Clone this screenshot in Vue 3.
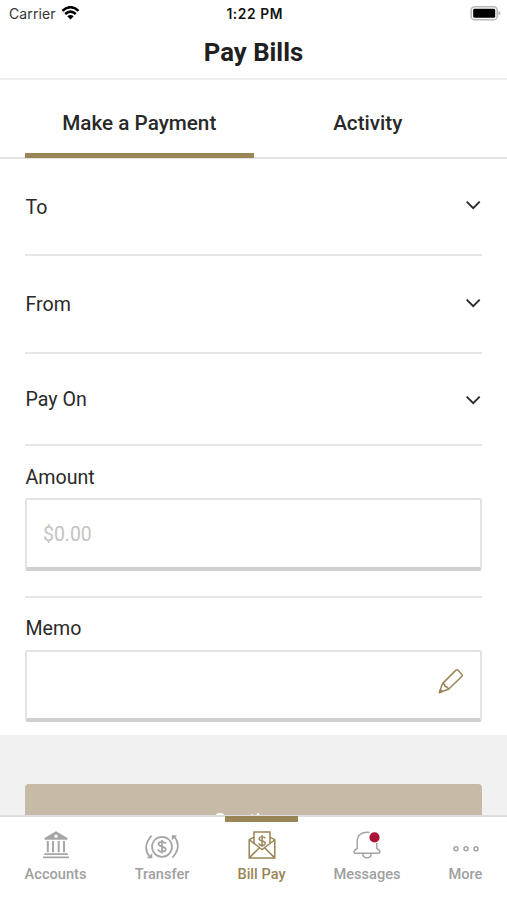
<script setup>
import { ref } from 'vue'

const tabs = ['Make a Payment', 'Activity']
const activeTab = ref(0)
const pickers = [
  { label: 'To', size: 'first' },
  { label: 'From', size: 'second' },
  { label: 'Pay On', size: 'third' },
]
const nav = [
  { id: 'accounts', label: 'Accounts' },
  { id: 'transfer', label: 'Transfer' },
  { id: 'billpay', label: 'Bill Pay' },
  { id: 'messages', label: 'Messages' },
  { id: 'more', label: 'More' },
]
</script>

<template>
  <div class="screen">
    <div class="status">
      <div class="carrier">
        <span>Carrier</span>
        <svg width="19" height="14" viewBox="0 0 18 14">
          <g fill="none" stroke="#000" stroke-width="2.5">
            <path d="M.9 4.9Q9-2.5 17.1 4.9" />
            <path d="M3.7 8Q9 3.2 14.3 8" />
          </g>
          <path d="M5.8 10.2Q9 7.6 12.2 10.2L9 13.6Z" />
        </svg>
      </div>
      <span class="clock">1:22 PM</span>
      <svg class="battery" width="31" height="15" viewBox="0 0 31 15">
        <rect x="1.2" y=".8" width="26" height="13" rx="3.4" fill="#fff" stroke="#b9b9b9" stroke-width="1.6" />
        <rect x="3.2" y="2.8" width="22" height="9" rx="1.4" />
        <path d="M28.5 5.1Q30.3 5.7 30.3 7.3T28.5 9.5Z" fill="#b0b0b0" />
      </svg>
    </div>
    <h1 class="title">Pay Bills</h1>

    <div class="tabs">
      <button v-for="(tab, i) in tabs" :key="tab" class="tab" :class="{ active: activeTab === i }" @click="activeTab = i">
        {{ tab }}
      </button>
    </div>

    <main class="form">
      <div v-for="p in pickers" :key="p.label" class="picker" :class="p.size">
        <span>{{ p.label }}</span>
        <svg width="18" height="12" viewBox="0 0 18 12">
          <path d="M2.7 2.6 9.2 9.1 15.7 2.6" fill="none" stroke="#292929" stroke-width="1.9" />
        </svg>
      </div>

      <div class="field amount">
        <label for="amount">Amount</label>
        <div class="box"><input id="amount" placeholder="$0.00" /></div>
      </div>

      <div class="field memo">
        <label for="memo">Memo</label>
        <div class="box">
          <input id="memo" />
          <svg width="26" height="26" viewBox="0 0 26 26" fill="none" stroke="#9a8556" stroke-width="1.5" stroke-linejoin="round">
            <path d="M1.4 24.5 4.5 15.6 18 2.1Q18.9 1.2 19.8 2.1L24 6.5Q24.8 7.4 24 8.2L10.5 21.3Z" />
            <path d="M4.5 15.6Q7 15.7 7.1 18.5 9.8 18.6 10.5 21.3" />
            <path d="M1.4 24.5 2.3 21.6 4.4 23.6Z" fill="#9a8556" />
          </svg>
        </div>
      </div>
    </main>

    <div class="action">
      <button class="continue">Continue</button>
    </div>

    <nav class="bottom">
      <a v-for="item in nav" :key="item.id" class="item" :class="item.id">
        <svg v-if="item.id === 'accounts'" width="28" height="28" viewBox="0 0 28 28" fill="#a6a6a6">
          <path fill-rule="evenodd" d="M14 .2 25.5 7V8.7H2.5V7ZM14 3.6A1.7 1.7 0 1 0 14 7 1.7 1.7 0 1 0 14 3.6Z" />
          <path d="M4.8 10h2v11.3h-2zM10 10h2v11.3h-2zM15.7 10h2v11.3h-2zM21 10h2v11.3h-2zM2.3 22.3h23.4v1.6H2.3zM1 25.6h26v1.7H1z" />
        </svg>
        <svg v-else-if="item.id === 'transfer'" width="34" height="28" viewBox="0 0 34 28" fill="none" stroke="#a4a4a4" stroke-width="1.7">
          <circle cx="17" cy="15.8" r="10" />
          <path d="M6.6 4.6Q-3.4 15.5 4.9 26.2M27.4 26.7Q37.4 15.5 29.1 5.2" />
          <path d="M2.4 27H7V22.8ZM31.6 4.6H27V8.8Z" fill="#a4a4a4" stroke-width=".6" />
          <path d="M20.7 12.8C20 10.3 13.5 10.2 13.5 13 13.5 16.3 20.8 14.9 20.8 18.3 20.8 21.6 13.6 21.5 13.2 18.4M17 9v13.4" />
        </svg>
        <svg v-else-if="item.id === 'billpay'" width="28" height="28" viewBox="0 0 28 28" fill="none" stroke="#9a8556" stroke-width="1.5">
          <path d="M6 6.2 1.2 8.7V27H26.8V8.7L22 6.2M6 12.7V1H22V12.7" />
          <path d="M1.5 9 14 18.5 26.5 9M1.5 26.6 11.5 16.7M26.5 26.6 16.5 16.7" />
          <path stroke-width="1.4" d="M17.2 7.4C16.8 5.4 11.1 5.1 11.1 7.8 11.1 10.6 17.3 9.4 17.3 12.3 17.3 15 11.1 14.8 10.8 12.3M14.1 3.9v12" />
        </svg>
        <svg v-else-if="item.id === 'messages'" width="28" height="28" viewBox="0 0 28 28" fill="none" stroke="#a4a4a4" stroke-width="1.5">
          <path d="M16.5 1.5C9 .2 4.2 4.2 4.2 10.5V17.3L1.7 19.3C.3 21.7 1.3 22.3 3 22.3H25C26.7 22.3 27.7 21.7 26.3 19.3L23.8 17.3V12" />
          <path d="M9.8 22.5C10 28.3 18 28.3 18.2 22.5" />
          <circle cx="21.5" cy="6.4" r="5.1" fill="#ae1237" stroke="none" />
        </svg>
        <svg v-else width="28" height="28" viewBox="0 0 28 28" fill="none" stroke="#a4a4a4" stroke-width="1.5">
          <circle cx="4" cy="17.7" r="2" /><circle cx="14" cy="17.7" r="2" /><circle cx="24" cy="17.7" r="2" />
        </svg>
        <span>{{ item.label }}</span>
      </a>
    </nav>
  </div>
</template>

<style>
body { margin: 0; background: #fff; }
</style>

<style scoped>
* { box-sizing: border-box; }
.screen {
  width: 507px; height: 900px; overflow: hidden; display: flex; flex-direction: column;
  background: #fff; color: #292929; font-family: Roboto, sans-serif;
}
button { border: 0; background: none; font: inherit; color: inherit; padding: 0; }
svg { display: block; flex: none; }
.status {
  height: 28px; flex: none; display: grid; grid-template-columns: 1fr auto 1fr; align-items: center;
  padding: 0 6.5px 0 9px; font-family: Inter, sans-serif; font-size: 14px; line-height: 28px;
}
.carrier { display: flex; align-items: center; gap: 5px; color: #333; }
.carrier span { letter-spacing: .1px; }
.carrier svg { margin-top: -2px; }
.clock { font-weight: 600; font-size: 13.8px; letter-spacing: .6px; color: #111; }
.battery { justify-self: end; margin-top: -2px; }
.title {
  height: 52px; flex: none; margin: 0; border-bottom: 2px solid #eee; text-align: center;
  font-size: 25.7px; font-weight: 700; line-height: 48px; color: #202020;
}
.tabs { height: 79px; flex: none; display: flex; padding: 0 25px; border-bottom: 2px solid #e3e3e3; }
.tab { flex: 1; height: 78px; padding-top: 13px; border-bottom: 5px solid transparent; font-size: 20.7px; font-weight: 500; }
.tab.active { border-color: #9a8556; }
.form { flex: none; height: 576px; padding: 0 25px; font-size: 19.6px; }
.picker { display: flex; justify-content: space-between; align-items: center; border-bottom: 2px solid #e6e6e6; }
.picker span, .field label { padding-left: .5px; }
.first { height: 97px; }
.first span { padding-top: 2px; }
.second { height: 98px; }
.third { height: 92px; }
.first svg { margin-bottom: 4px; }
.second svg { margin-bottom: 2px; }
.third svg { margin-top: 2px; }
.field { display: flex; flex-direction: column; }
.field label { height: 52px; line-height: 62px; }
.amount label { line-height: 64px; }
.amount { height: 152px; border-bottom: 2px solid #e6e6e6; }
.box {
  height: 73px; display: flex; align-items: center; padding: 0 16px; background: #fff;
  border: 2px solid #e3e3e3; border-bottom: 4px solid #d0d0d0; border-radius: 3px;
}
.box svg { margin-bottom: 8px; }
.memo .box { height: 72px; }
.box input { flex: 1; min-width: 0; border: 0; padding: 2px 0 0; outline: 0; background: none; font: 19.4px Roboto, sans-serif; }
.box input::placeholder { color: #c4c4c4; opacity: 1; }
.action { height: 80px; flex: none; padding: 49px 25px 0; background: #f1f1f1; overflow: hidden; }
.continue { width: 457px; height: 73px; padding-top: 1px; border-radius: 4px; background: #c7bba8; color: #fff; font-size: 20px; font-weight: 500; }
.bottom { position: relative; height: 85px; flex: none; display: flex; border-top: 2px solid #dedede; background: #fff; color: #a0a0a0; }
.item { position: relative; display: flex; flex-direction: column; align-items: center; padding-top: 14px; font-size: 14.6px; font-weight: 500; line-height: 30px; }
.item span { white-space: nowrap; }
.accounts { width: 111px; }
.transfer { width: 102px; }
.billpay { width: 97px; color: #9a8556; }
.messages { width: 114px; }
.more { width: 83px; }
.billpay::before { content: ''; position: absolute; top: -1px; left: 12px; width: 73px; height: 6px; background: #9a8556; }
</style>
